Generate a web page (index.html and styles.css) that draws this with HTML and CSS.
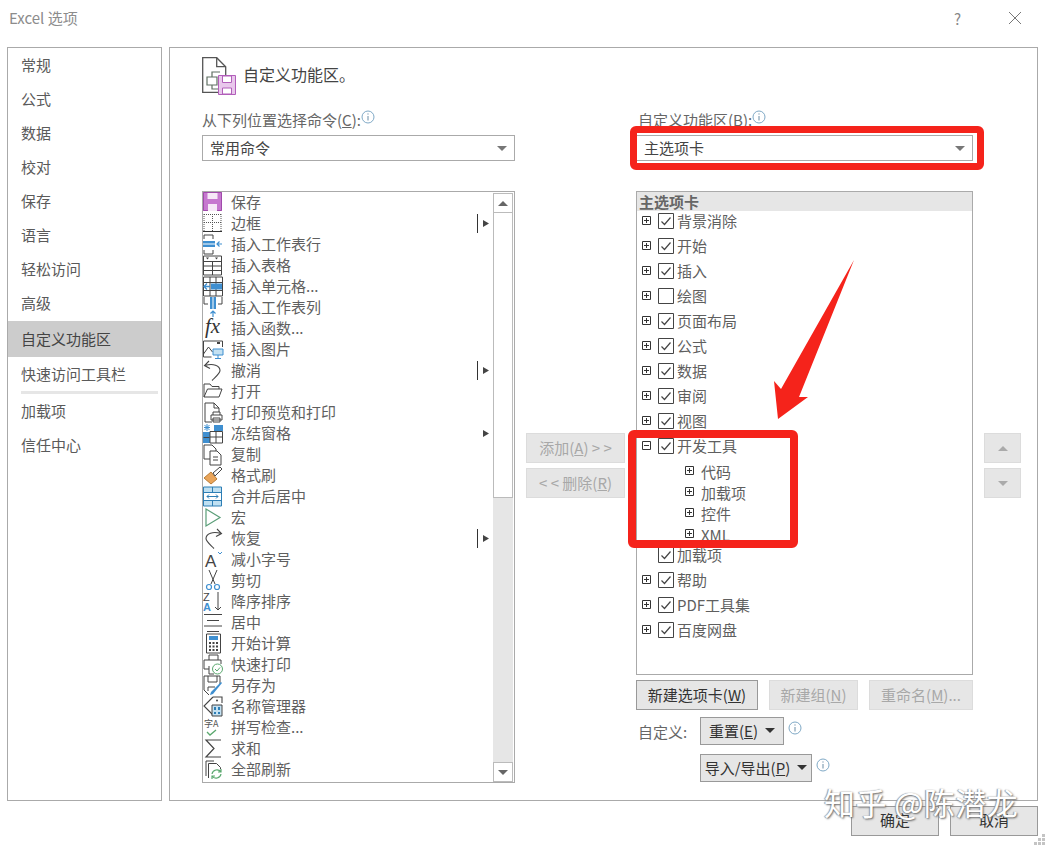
FILE: index.html
```html
<!DOCTYPE html>
<html lang="zh">
<head>
<meta charset="utf-8">
<title>Excel 选项</title>
<link rel="stylesheet" href="styles.css">
</head>
<body>
<svg class="sprite" aria-hidden="true">
  <symbol id="plus" viewBox="0 0 9 9"><path d="M.5.5h8v8h-8zM2 4.500h5M4.500 2v5" fill="none" stroke="#333"/></symbol>
  <symbol id="minus" viewBox="0 0 9 9"><path d="M.5.5h8v8h-8zM2 4.500h5" fill="none" stroke="#333"/></symbol>
  <symbol id="check" viewBox="0 0 16 16"><path d="M.5.5h15v15H.5z" fill="#fff" stroke="#444"/><path d="M3.500 8.500l3 3 6-7" fill="none" stroke="#444" stroke-width="1.200"/></symbol>
  <symbol id="uncheck" viewBox="0 0 16 16"><path d="M.5.5h15v15H.5z" fill="#fff" stroke="#444"/></symbol>
  <symbol id="info" viewBox="0 0 14 14"><circle cx="7" cy="7" r="6" fill="#fff" stroke="#7fa9c6"/><path d="M7 6v4.500M7 3.400v1.200" stroke="#6b8da6" fill="none"/></symbol>
  <symbol id="sub" viewBox="0 0 16 21"><path d="M1.500 1v19" stroke="#333" fill="none"/><path d="M7 7l6 3.500-6 3.500z" fill="#444"/></symbol>
</svg>
<div class="dialog">
  <header class="titlebar">
    <span class="title">Excel 选项</span>
    <div class="win-btns">
      <span class="help">?</span>
      <svg class="close" viewBox="0 0 14 14"><path d="M1 1l12 12M13 1L1 13" stroke="#777" fill="none"/></svg>
    </div>
  </header>
  <div class="body">
    <nav class="sidebar">
      <div class="nav-item">常规</div>
      <div class="nav-item">公式</div>
      <div class="nav-item">数据</div>
      <div class="nav-item">校对</div>
      <div class="nav-item">保存</div>
      <div class="nav-item">语言</div>
      <div class="nav-item">轻松访问</div>
      <div class="nav-item">高级</div>
      <div class="nav-item selected">自定义功能区</div>
      <div class="nav-item">快速访问工具栏</div>
      <div class="nav-sep"></div>
      <div class="nav-item">加载项</div>
      <div class="nav-item">信任中心</div>
    </nav>
    <main class="panel">
      <div class="panel-head">
        <svg class="head-icon" viewBox="0 0 34 38">
          <path d="M.7.700h14l9 9V35.300H.7z" fill="#fff" stroke="#555" stroke-width="1.300"/>
          <path d="M14.700.700v9h9" fill="none" stroke="#555" stroke-width="1.300"/>
          <path d="M18 15h-8v5H5v8h5v4h8M10 20h5v8h-5" fill="none" stroke="#5f6f62" stroke-width="1.200"/>
          <path d="M16.500 18.500h17v19h-17z" fill="#e9c8ec" stroke="#b25fba"/>
          <path d="M20.500 19h9v6.500h-9zM20.500 31h9v6h-9z" fill="#fff" stroke="#b25fba"/>
        </svg>
        <h1 class="panel-title">自定义功能区。</h1>
      </div>
      <div class="cols">
        <section class="col col-left">
          <div class="field-label">从下列位置选择命令(<u>C</u>):<svg class="info"><use href="#info"/></svg></div>
          <div class="select"><span>常用命令</span><i class="caret"></i></div>
          <div class="cmd-list">
            <div class="cmd-rows">
              <div class="cmd"><svg class="ic" viewBox="0 0 20 21"><path d="M0 0h19v19H0z" fill="#c678cf"/><path d="M.500.500h18v18H.500z" fill="none" stroke="#a04aab"/><path d="M4.500 1h10v6h-10zM5 12h9v7H5z" fill="#f6e8f7"/></svg><span>保存</span></div>
              <div class="cmd"><svg class="ic" viewBox="0 0 20 21"><path d="M1 1.500h17M9.500 1v17M1 9.500h17M1 1v17M18 1v17" fill="none" stroke="#555" stroke-dasharray="1 1"/><path d="M0 18.500h19" stroke="#333"/></svg><span>边框</span><svg class="sub"><use href="#sub"/></svg></div>
              <div class="cmd"><svg class="ic" viewBox="0 0 20 21"><path d="M1 5V1h9v4M1 16v4h9v-4" fill="none" stroke="#444"/><path d="M0 7h12v6H0z" fill="#3f8fd0"/><path d="M0 10h12" stroke="#fff"/><path d="M19 10h-5M16.500 7.500L14 10l2.500 2.500" fill="none" stroke="#3f8fd0" stroke-width="1.200"/></svg><span>插入工作表行</span></div>
              <div class="cmd"><svg class="ic" viewBox="0 0 20 21"><path d="M.5 1h18v19H.5zM.500 6.500h18M.500 11h18M.500 15.500h18M9.500 6.500V20" fill="none" stroke="#444"/><path d="M3 2.500l1.500 2 1.500-2zM12 2.500l1.500 2 1.500-2z" fill="#444"/></svg><span>插入表格</span></div>
              <div class="cmd"><svg class="ic" viewBox="0 0 20 21"><path d="M.5 1h19v19H.5zM.500 6.500h19M.500 14.500h19M7 1v19M13 1v19" fill="none" stroke="#444"/><path d="M8 7.500h11v6H8z" fill="#3f8fd0"/><path d="M7 10.500H1M4 7.500l-3 3 3 3" fill="none" stroke="#3f8fd0" stroke-width="1.300"/></svg><span>插入单元格...</span></div>
              <div class="cmd"><svg class="ic" viewBox="0 0 20 21"><path d="M1 0v7h4M19 0v7h-4" fill="none" stroke="#444"/><path d="M7 0h6v12H7z" fill="#3f8fd0"/><path d="M10 0v12" stroke="#fff"/><path d="M10 20v-6M7.500 16.500L10 14l2.500 2.500" fill="none" stroke="#3f8fd0" stroke-width="1.200"/></svg><span>插入工作表列</span></div>
              <div class="cmd"><svg class="ic" viewBox="0 0 20 21"><text class="fx" x="2" y="15">fx</text></svg><span>插入函数...</span></div>
              <div class="cmd"><svg class="ic" viewBox="0 0 20 21"><path d="M.5 2h19v6M.5 2v16h8M.5 15l5-7 4 5" fill="none" stroke="#444"/><path d="M14 3h3v2h-3z" fill="#444"/><path d="M10 10h10v6H10z" fill="#c4e1f2" stroke="#3f8fd0"/><path d="M15 16v3M12 19.500h6" stroke="#3f8fd0"/></svg><span>插入图片</span></div>
              <div class="cmd"><svg class="ic" viewBox="0 0 20 21"><path d="M6 1L1.500 5.500l5.500 3M2 5.500c8-2.500 15 0 15 5 0 3-4 6-8 10" fill="none" stroke="#444" stroke-width="1.100"/></svg><span>撤消</span><svg class="sub"><use href="#sub"/></svg></div>
              <div class="cmd"><svg class="ic" viewBox="0 0 20 21"><path d="M1 16V3h6l2 2.500h7V8M1 16l3.500-8H19l-3 8z" fill="none" stroke="#444"/></svg><span>打开</span></div>
              <div class="cmd"><svg class="ic" viewBox="0 0 20 21"><path d="M9 20H2V1h9l5 5v4M11 1v5h5" fill="none" stroke="#444"/><path d="M8 13h11v5H8zM10 13v-3h7v3M10 16h7v4h-7z" fill="#fff" stroke="#444"/></svg><span>打印预览和打印</span></div>
              <div class="cmd"><svg class="ic" viewBox="0 0 20 21"><path d="M0 9h7v11H0z" fill="#3f8fd0"/><path d="M11 2h9v6h-9z" fill="#3f8fd0"/><path d="M7 8.500h12.500V20H7zM13 8v12M7 14h13M.500 14.500h6" fill="none" stroke="#444"/><path d="M4 1v7M1 4.500h6M1.500 2l5 5M6.500 2l-5 5" stroke="#3f8fd0" fill="none"/></svg><span>冻结窗格</span><svg class="sub sub-plain"><use href="#sub"/></svg></div>
              <div class="cmd"><svg class="ic" viewBox="0 0 20 21"><path d="M7 15H1V1h8l4 4v2" fill="none" stroke="#444"/><path d="M7 7h7l4 4v10H7z" fill="#fff" stroke="#444"/><path d="M10 13h5M10 16h5" stroke="#444"/></svg><span>复制</span></div>
              <div class="cmd"><svg class="ic" viewBox="0 0 20 21"><path d="M1 13l7-6 6 7-6 5z" fill="#eaa55a" stroke="#b97c35"/><path d="M10 8l7-6 2 2-7 7z" fill="#fff" stroke="#444"/></svg><span>格式刷</span></div>
              <div class="cmd"><svg class="ic" viewBox="0 0 20 21"><path d="M.5 1h18v19H.5z" fill="#bfe0f2" stroke="#2d7eb5"/><path d="M1 6.500h17v8H1z" fill="#fff"/><path d="M1 6.500h17M1 14.500h17M9.500 1v5M9.500 15v5" stroke="#2d7eb5" fill="none"/><path d="M4 10.500h11M6 8.500l-2 2 2 2M13 8.500l2 2-2 2" fill="none" stroke="#2d7eb5"/></svg><span>合并后居中</span></div>
              <div class="cmd"><svg class="ic" viewBox="0 0 20 21"><path d="M3 2l14 8.500L3 19z" fill="none" stroke="#5a9e78" stroke-width="1.200"/></svg><span>宏</span></div>
              <div class="cmd"><svg class="ic" viewBox="0 0 20 21"><path d="M14 1L18.500 5.500 13 8.500M18 5.500C10 3 3 5.500 3 10.500c0 3 4 6 8 10" fill="none" stroke="#444" stroke-width="1.100"/></svg><span>恢复</span><svg class="sub"><use href="#sub"/></svg></div>
              <div class="cmd"><svg class="ic" viewBox="0 0 20 21"><text class="ic-a" x="2" y="18">A</text><path d="M15 3l2 2 2-2" fill="none" stroke="#3f8fd0"/></svg><span>减小字号</span></div>
              <div class="cmd"><svg class="ic" viewBox="0 0 20 21"><path d="M6 0l6 14M14 0L8 14" stroke="#444" fill="none"/><circle cx="6" cy="17" r="2.500" fill="none" stroke="#3f8fd0" stroke-width="1.200"/><circle cx="14" cy="17" r="2.500" fill="none" stroke="#3f8fd0" stroke-width="1.200"/></svg><span>剪切</span></div>
              <div class="cmd"><svg class="ic" viewBox="0 0 20 21"><text class="ic-z" x="0" y="10">Z</text><text class="ic-za" x="0" y="20">A</text><path d="M15 1v18M12 16l3 3 3-3" fill="none" stroke="#444"/></svg><span>降序排序</span></div>
              <div class="cmd"><svg class="ic" viewBox="0 0 20 21"><path d="M1 2.500h18M4 8.500h12M1 14h18M4 19.500h12" stroke="#444" fill="none"/></svg><span>居中</span></div>
              <div class="cmd"><svg class="ic" viewBox="0 0 20 21"><path d="M3.500 1h14v19h-14z" fill="#fff" stroke="#444"/><path d="M6 3h9v4H6z" fill="#3f8fd0"/><path d="M6 9h2v2H6zM9.500 9h2v2h-2zM13 9h2v2h-2zM6 12.500h2v2H6zM9.500 12.500h2v2h-2zM13 12.500h2v2h-2zM6 16h2v2H6zM9.500 16h2v2h-2zM13 16h2v2h-2z" fill="#444"/></svg><span>开始计算</span></div>
              <div class="cmd"><svg class="ic" viewBox="0 0 20 21"><path d="M6 6V1h9v5M1 6h17v4M1 6v9h5M6 12v8h5" fill="none" stroke="#444"/><circle cx="14.500" cy="15" r="5" fill="#fff" stroke="#5aa86e"/><path d="M12 15l2 2 3-3.500" fill="none" stroke="#5aa86e"/></svg><span>快速打印</span></div>
              <div class="cmd"><svg class="ic" viewBox="0 0 20 21"><path d="M1 1h16v8M1 1v14l5 5M5 1v6h9V1M5 16v-4h7" fill="none" stroke="#444"/><path d="M19 8l-1-1-10 10-1 3 3-1z" fill="#3f8fd0"/></svg><span>另存为</span></div>
              <div class="cmd"><svg class="ic" viewBox="0 0 20 21"><path d="M10 1L1 10l9 9M10 1h9v6" fill="none" stroke="#444" stroke-width="1.100"/><circle cx="14" cy="4.500" r="1" fill="#444"/><path d="M9 9h10v11H9z" fill="#c4e1f2" stroke="#444"/><path d="M11 11h2v3h-2zM15 11h2v3h-2zM11 16h2v2h-2zM15 16h2v2h-2z" fill="#2d7eb5"/></svg><span>名称管理器</span></div>
              <div class="cmd"><svg class="ic" viewBox="0 0 20 21"><text class="ic-zi" x="1" y="10">字A</text><path d="M4 15l3 3 6-5" fill="none" stroke="#5aa86e" stroke-width="1.300"/></svg><span>拼写检查...</span></div>
              <div class="cmd"><svg class="ic" viewBox="0 0 20 21"><path d="M18 2H3l8 8.500L3 19h15" fill="none" stroke="#444" stroke-width="1.200"/></svg><span>求和</span></div>
              <div class="cmd"><svg class="ic" viewBox="0 0 20 21"><path d="M3 17V2h8M5.500 19V4.500h8l4 4V10" fill="none" stroke="#444"/><path d="M9 15a5 5 0 0 1 9-2M18 15a5 5 0 0 1-9 2M18 10v3h-3M9 20v-3h3" fill="none" stroke="#5aa86e" stroke-width="1.200"/></svg><span>全部刷新</span></div>
            </div>
            <div class="scrollbar">
              <div class="scroll-btn"><i class="tri-up"></i></div>
              <div class="scroll-thumb"></div>
              <div class="scroll-track"></div>
              <div class="scroll-btn"><i class="tri-down"></i></div>
            </div>
          </div>
        </section>
        <section class="col-mid">
          <button class="btn disabled wide"><span>添加(<u>A</u>) &gt; &gt;</span></button>
          <button class="btn disabled wide"><span>&lt; &lt; 删除(<u>R</u>)</span></button>
        </section>
        <section class="col col-right">
          <div class="field-label">自定义功能区(<u>B</u>):<svg class="info"><use href="#info"/></svg></div>
          <div class="select"><span>主选项卡</span><i class="caret"></i></div>
          <div class="tree">
            <div class="tree-head">主选项卡</div>
            <div class="tree-row"><svg class="exp"><use href="#plus"/></svg><svg class="chk"><use href="#check"/></svg><span>背景消除</span></div>
            <div class="tree-row"><svg class="exp"><use href="#plus"/></svg><svg class="chk"><use href="#check"/></svg><span>开始</span></div>
            <div class="tree-row"><svg class="exp"><use href="#plus"/></svg><svg class="chk"><use href="#check"/></svg><span>插入</span></div>
            <div class="tree-row"><svg class="exp"><use href="#plus"/></svg><svg class="chk"><use href="#uncheck"/></svg><span>绘图</span></div>
            <div class="tree-row"><svg class="exp"><use href="#plus"/></svg><svg class="chk"><use href="#check"/></svg><span>页面布局</span></div>
            <div class="tree-row"><svg class="exp"><use href="#plus"/></svg><svg class="chk"><use href="#check"/></svg><span>公式</span></div>
            <div class="tree-row"><svg class="exp"><use href="#plus"/></svg><svg class="chk"><use href="#check"/></svg><span>数据</span></div>
            <div class="tree-row"><svg class="exp"><use href="#plus"/></svg><svg class="chk"><use href="#check"/></svg><span>审阅</span></div>
            <div class="tree-row"><svg class="exp"><use href="#plus"/></svg><svg class="chk"><use href="#check"/></svg><span>视图</span></div>
            <div class="tree-row"><svg class="exp"><use href="#minus"/></svg><svg class="chk"><use href="#check"/></svg><span>开发工具</span></div>
            <div class="tree-child first"><svg class="exp"><use href="#plus"/></svg><span>代码</span></div>
            <div class="tree-child"><svg class="exp"><use href="#plus"/></svg><span>加载项</span></div>
            <div class="tree-child"><svg class="exp"><use href="#plus"/></svg><span>控件</span></div>
            <div class="tree-child"><svg class="exp"><use href="#plus"/></svg><span>XML</span></div>
            <div class="tree-row after-child"><span class="exp"></span><svg class="chk"><use href="#check"/></svg><span>加载项</span></div>
            <div class="tree-row"><svg class="exp"><use href="#plus"/></svg><svg class="chk"><use href="#check"/></svg><span>帮助</span></div>
            <div class="tree-row"><svg class="exp"><use href="#plus"/></svg><svg class="chk"><use href="#check"/></svg><span>PDF工具集</span></div>
            <div class="tree-row"><svg class="exp"><use href="#plus"/></svg><svg class="chk"><use href="#check"/></svg><span>百度网盘</span></div>
          </div>
          <div class="tree-actions">
            <button class="btn new-tab"><span>新建选项卡(<u>W</u>)</span></button>
            <button class="btn disabled new-group"><span>新建组(<u>N</u>)</span></button>
            <button class="btn disabled rename"><span>重命名(<u>M</u>)...</span></button>
          </div>
          <div class="custom-row">
            <span class="custom-label">自定义:</span>
            <button class="btn reset"><span>重置(<u>E</u>)</span><i class="caret dark"></i></button>
            <svg class="info"><use href="#info"/></svg>
          </div>
          <div class="custom-row second">
            <button class="btn export"><span>导入/导出(<u>P</u>)</span><i class="caret dark"></i></button>
            <svg class="info"><use href="#info"/></svg>
          </div>
        </section>
        <section class="col-updown">
          <button class="btn disabled arrow"><i class="tri-up light"></i></button>
          <button class="btn disabled arrow"><i class="tri-down light"></i></button>
        </section>
      </div>
    </main>
  </div>
  <footer class="footer">
    <button class="btn foot"><span>确定</span></button>
    <button class="btn foot"><span>取消</span></button>
  </footer>
  <svg class="grip" viewBox="0 0 11 12"><path d="M8 0h3v3H8zM4 4h3v3H4zM8 4h3v3H8zM0 8h3v3H0zM4 8h3v3H4zM8 8h3v3H8z" fill="#c4c4c4"/></svg>
  <div class="mark mark-select"></div>
  <div class="mark mark-tree"></div>
  <svg class="arrow-mark" viewBox="0 0 90 170"><path d="M82 1L27 138l9 0L6 160 2 122l7 8z" fill="#f5231b"/></svg>
  <div class="watermark">知乎 @陈潜龙</div>
</div>
</body>
</html>
```

FILE: styles.css
```css
* { box-sizing: border-box; }
html, body { margin: 0; padding: 0; background: #fff; }
body {
  font-family: "Noto Sans CJK SC", "Noto Sans", sans-serif;
  font-size: 15px;
  color: #555;
}
.sprite { display: none; }
.dialog { position: relative; width: 1045px; height: 846px; overflow: hidden; background: #fff; }

.titlebar { height: 47px; display: flex; align-items: flex-start; justify-content: space-between; padding: 8px 23px 0 9px; }
.title { font-size: 15px; line-height: 20px; color: #8c8c8c; }
.win-btns { display: flex; align-items: center; gap: 47px; height: 20px; }
.help { font-size: 15px; color: #888; }
.close { width: 14px; height: 14px; }

.body { display: flex; gap: 7px; height: 754px; padding: 0 7px; }
.sidebar { width: 155px; border: 1px solid #aaa; }
.nav-item { height: 34px; line-height: 34px; padding-left: 13px; color: #5a5a5a; white-space: nowrap; }
.nav-item.selected { height: 36px; line-height: 36px; margin-top: 1px; background: #ccc; color: #444; }
.nav-sep { height: 3px; margin: 0 3px 0 13px; background: #e6e6e6; }

.panel { flex: 1; border: 1px solid #aaa; }
.panel-head { height: 62px; padding: 9px 0 0 32px; display: flex; align-items: flex-start; gap: 7px; }
.head-icon { width: 34px; height: 38px; }
.panel-title { margin: 5px 0 0; font-size: 16px; line-height: 24px; font-weight: 400; color: #444; }

.cols { display: flex; align-items: flex-start; padding-left: 32px; }
.col-left { width: 313px; }
.col-right { width: 337px; }
.col-mid { width: 99px; margin: 323px 11px 0; display: flex; flex-direction: column; gap: 5px; }
.col-updown { width: 37px; margin: 323px 0 0 11px; display: flex; flex-direction: column; gap: 5px; }

.field-label { height: 25px; line-height: 20px; display: flex; align-items: flex-start; color: #666; white-space: nowrap; }
.col-right .field-label { padding-left: 2px; }
.info { width: 14px; height: 14px; flex: none; }

.select { height: 26px; border: 1px solid #aaa; display: flex; align-items: center; justify-content: space-between; padding: 0 7px; background: #fff; color: #444; line-height: 22px; }
.select span { margin-top: -1px; }
.caret { width: 0; height: 0; border-left: 5px solid transparent; border-right: 5px solid transparent; border-top: 5px solid #777; }
.caret.dark { border-top-color: #333; }

.cmd-list { margin-top: 30px; height: 592px; border: 1px solid #aaa; display: flex; overflow: hidden; }
.cmd-rows { flex: 1; min-width: 0; overflow: hidden; }
.cmd { position: relative; height: 21px; display: flex; align-items: center; gap: 8px; line-height: 21px; color: #5f5f5f; }
.cmd span { margin-top: -2px; }
.ic { width: 20px; height: 21px; flex: none; overflow: visible; }
.sub { position: absolute; right: 1px; top: 0; width: 16px; height: 21px; }
.sub-plain { clip-path: inset(0 0 0 4px); }
.fx { font-family: "Liberation Serif", serif; font-style: italic; font-size: 21px; fill: #333; }
.ic-a { font-family: "Liberation Sans", sans-serif; font-size: 17px; fill: #444; }
.ic-z { font-family: "Liberation Sans", sans-serif; font-size: 11px; fill: #444; }
.ic-za { font-family: "Liberation Sans", sans-serif; font-size: 11px; font-weight: 700; fill: #3f8fd0; }
.ic-zi { font-family: "Noto Sans CJK SC", sans-serif; font-size: 9px; fill: #555; }

.scrollbar { width: 20px; margin-right: 1px; display: flex; flex-direction: column; padding-top: 1px; }
.scroll-btn { height: 20px; flex: none; border: 1px solid #bbb; display: flex; align-items: center; justify-content: center; background: #fff; }
.scroll-thumb { height: 285px; flex: none; border: 1px solid #bbb; border-top: 0; background: #fff; }
.scroll-track { flex: 1; background: #e6e6e6; }
.tri-up, .tri-down { width: 0; height: 0; border-left: 5px solid transparent; border-right: 5px solid transparent; display: block; }
.tri-up { border-bottom: 5px solid #666; }
.tri-down { border-top: 5px solid #666; }
.tri-up.light { border-bottom-color: #aaa; }
.tri-down.light { border-top-color: #aaa; }

.tree { margin-top: 30px; height: 484px; border: 1px solid #aaa; overflow: hidden; }
.tree-head { height: 19px; line-height: 19px; margin-bottom: -3px; padding-left: 2px; background: #e6e6e6; font-weight: 700; color: #666; }
.tree-row { position: relative; height: 25px; display: flex; align-items: center; padding-left: 5px; color: #5f5f5f; }
.tree-row .exp { width: 9px; height: 9px; flex: none; }
.chk { width: 16px; height: 16px; flex: none; margin: 0 3px 0 7px; }
.tree-child { height: 21px; display: flex; align-items: center; padding-left: 48px; color: #5f5f5f; overflow: hidden; }
.tree-child .exp { width: 9px; height: 9px; flex: none; margin: -2px 7px 0 0; }
.tree-child.first { margin-top: 3px; }
.after-child { margin-top: -3px; }

.btn { font: inherit; color: #333; border: 1px solid #999; background: #e6e6e6; padding: 0 0 2px; display: flex; align-items: center; justify-content: center; white-space: nowrap; }
.btn.disabled { color: #a8a8a8; border-color: #dcdcdc; }
.btn.wide { width: 99px; height: 30px; }
.btn.arrow { width: 37px; height: 30px; padding: 0; }
.btn.foot { width: 88px; height: 30px; padding-bottom: 4px; }

.tree-actions { display: flex; margin-top: 5px; gap: 11px; }
.new-tab { width: 122px; height: 30px; }
.new-group { width: 89px; height: 30px; }
.rename { width: 104px; height: 30px; }

.custom-row { display: flex; align-items: flex-start; margin-top: 7px; height: 28px; }
.custom-row.second { margin-top: 9px; padding-left: 64px; }
.custom-label { width: 64px; padding-left: 2px; line-height: 30px; color: #666; }
.custom-row .info { margin: 4px 0 0 4px; }
.reset { width: 84px; height: 28px; gap: 7px; }
.export { width: 112px; height: 28px; gap: 7px; }

.footer { display: flex; justify-content: flex-end; gap: 11px; padding: 5px 7px 0 0; }

.grip { position: absolute; right: 0; bottom: 0; width: 11px; height: 12px; }

.mark { position: absolute; border: 7px solid #f5231b; border-radius: 6px; }
.mark-select { left: 630px; top: 126px; width: 354px; height: 44px; }
.mark-tree { left: 628px; top: 430px; width: 170px; height: 118px; border-width: 8px; }
.arrow-mark { position: absolute; left: 772px; top: 259px; width: 90px; height: 170px; }

.watermark { position: absolute; left: 824px; top: 780px; font-size: 31px; line-height: 44px; letter-spacing: 0.4px; color: #fff; text-shadow: 1px 1px 2px #666, -1px 0 1px #999; white-space: nowrap; }
```
